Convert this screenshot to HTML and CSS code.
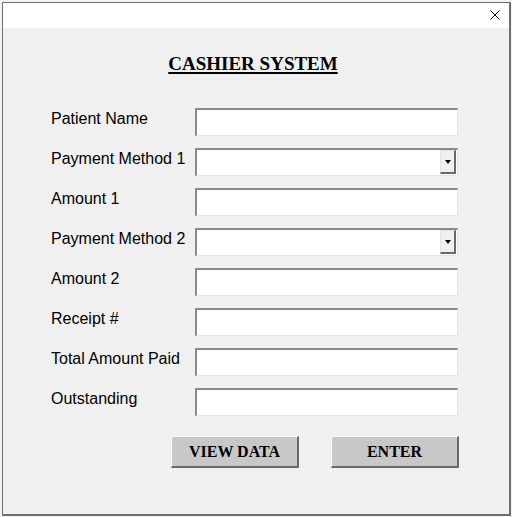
FILE: index.html
```html
<!DOCTYPE html>
<html lang="en">

<head>
  <meta charset="UTF-8">
  <meta name="viewport" content="width=device-width, initial-scale=1.0">
  <title>Cashier System</title>
  <link rel="stylesheet" href="styles.css">
</head>

<body>
  <div class="window">
    <div class="titlebar">
      <svg class="close" width="10" height="10" viewBox="0 0 10 10">
        <path d="M0.5 0.5 L9.5 9.5 M9.5 0.5 L0.5 9.5" stroke="#000" stroke-width="1" fill="none" />
      </svg>
    </div>

    <div class="content">
      <h1 class="heading">CASHIER SYSTEM</h1>

      <div class="form">
        <label class="lbl">Patient Name</label>
        <input class="field" type="text">

        <label class="lbl">Payment Method 1</label>
        <div class="combo">
          <input class="combo-text" type="text">
          <span class="drop"><span class="arrow"></span></span>
        </div>

        <label class="lbl">Amount 1</label>
        <input class="field" type="text">

        <label class="lbl">Payment Method 2</label>
        <div class="combo">
          <input class="combo-text" type="text">
          <span class="drop"><span class="arrow"></span></span>
        </div>

        <label class="lbl">Amount 2</label>
        <input class="field" type="text">

        <label class="lbl">Receipt #</label>
        <input class="field" type="text">

        <label class="lbl">Total Amount Paid</label>
        <input class="field" type="text">

        <label class="lbl">Outstanding</label>
        <input class="field" type="text">
      </div>

      <div class="actions">
        <button class="btn">VIEW DATA</button>
        <button class="btn">ENTER</button>
      </div>
    </div>
  </div>
</body>

</html>
```

FILE: styles.css
```css
html,
body {
  margin: 0;
  padding: 0;
}

body {
  background-color: #f3f3f3;
  width: 512px;
  height: 517px;
  overflow: hidden;
}

.window {
  box-sizing: border-box;
  margin: 2px 0 0 2px;
  width: 509px;
  height: 514px;
  border: 1px solid #6f6f6f;
  border-right-width: 2px;
  border-bottom-width: 2px;
  background-color: #f0f0f0;
}

.titlebar {
  height: 25px;
  background-color: #fff;
  display: flex;
  justify-content: flex-end;
  align-items: flex-start;
}

.close {
  display: block;
  margin: 7px 9px 0 0;
}

.content {
  padding-top: 25px;
}

.heading {
  margin: 0 0 33px 0;
  padding-right: 6px;
  text-align: center;
  font-family: "Liberation Serif", serif;
  font-size: 19px;
  line-height: 22px;
  font-weight: bold;
  color: #000;
  text-decoration: underline;
  text-decoration-thickness: 2px;
  text-underline-offset: 2px;
}

.form {
  display: grid;
  grid-template-columns: 144px 263px;
  row-gap: 12px;
  padding-left: 48px;
}

.lbl {
  padding-top: 2px;
  font-family: "Liberation Sans", Arial, sans-serif;
  font-size: 16px;
  line-height: 18px;
  color: #000;
}

.field,
.combo {
  box-sizing: border-box;
  width: 263px;
  height: 28px;
  margin: 0;
  border-style: solid;
  border-width: 2px 1px 1px 2px;
  border-color: #8a8a8a #e3e3e3 #e3e3e3 #8a8a8a;
  background-color: #fff;
  outline: none;
}

.combo {
  display: flex;
  align-items: stretch;
  padding: 0 1px 1px 0;
}

.combo-text {
  flex: 1;
  min-width: 0;
  margin: 0;
  padding: 0;
  border: none;
  background: transparent;
  outline: none;
}

.drop {
  box-sizing: border-box;
  width: 16px;
  display: flex;
  justify-content: center;
  align-items: center;
  background-color: #f0f0f0;
  border-style: solid;
  border-width: 1px 2px 2px 1px;
  border-color: #e3e3e3 #696969 #696969 #e3e3e3;
}

.arrow {
  width: 0;
  height: 0;
  margin-top: 1px;
  border-left: 3.5px solid transparent;
  border-right: 3.5px solid transparent;
  border-top: 4px solid #000;
}

.actions {
  display: flex;
  gap: 32px;
  padding-left: 168px;
  margin-top: 20px;
}

.btn {
  box-sizing: border-box;
  width: 128px;
  height: 32px;
  margin: 0;
  padding: 0;
  background-color: #c8c8c8;
  border-style: solid;
  border-width: 1px 2px 2px 1px;
  border-color: #fff #6a6a6a #6a6a6a #fff;
  font-family: "Liberation Serif", serif;
  font-size: 16px;
  font-weight: bold;
  color: #000;
}
```
